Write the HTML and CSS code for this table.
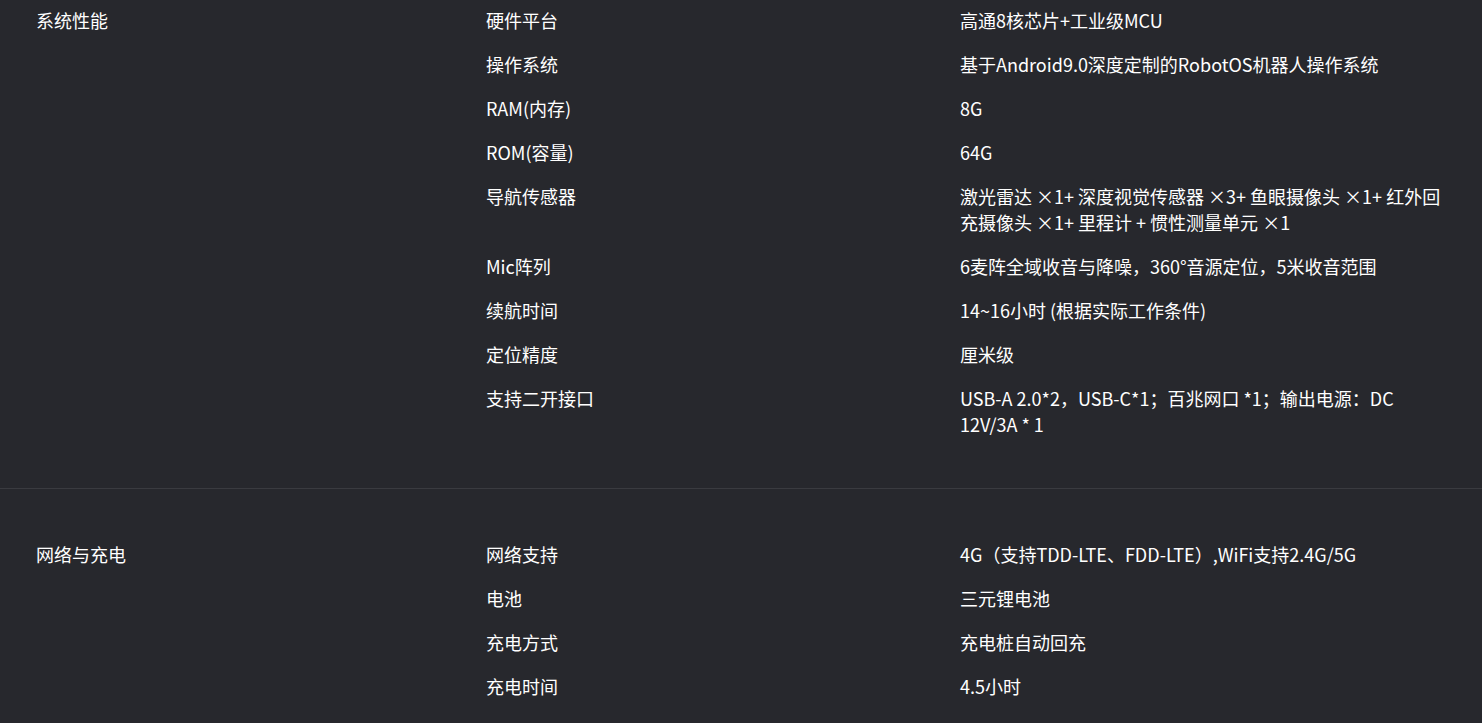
FILE: index.html
```html
<!DOCTYPE html>
<html lang="zh-CN">
<head>
    <meta charset="UTF-8">
    <meta name="viewport" content="width=device-width, initial-scale=1.0">
    <title>产品参数</title>
    <link rel="stylesheet" href="styles.css">
</head>
<body>
    <div class="specs">
        <section class="spec-group">
            <h3 class="group-title">系统性能</h3>
            <dl class="spec-list">
                <div class="spec-row"><dt>硬件平台</dt><dd>高通8核芯片+工业级MCU</dd></div>
                <div class="spec-row"><dt>操作系统</dt><dd>基于Android9.0深度定制的RobotOS机器人操作系统</dd></div>
                <div class="spec-row"><dt>RAM(内存)</dt><dd>8G</dd></div>
                <div class="spec-row"><dt>ROM(容量)</dt><dd>64G</dd></div>
                <div class="spec-row"><dt>导航传感器</dt><dd>激光雷达 ×1+ 深度视觉传感器 ×3+ 鱼眼摄像头 ×1+ 红外回充摄像头 ×1+ 里程计 + 惯性测量单元 ×1</dd></div>
                <div class="spec-row"><dt>Mic阵列</dt><dd>6麦阵全域收音与降噪，360°音源定位，5米收音范围</dd></div>
                <div class="spec-row"><dt>续航时间</dt><dd>14~16小时 (根据实际工作条件)</dd></div>
                <div class="spec-row"><dt>定位精度</dt><dd>厘米级</dd></div>
                <div class="spec-row"><dt>支持二开接口</dt><dd>USB-A 2.0*2，USB-C*1；百兆网口 *1；输出电源：DC 12V/3A * 1</dd></div>
            </dl>
        </section>

        <section class="spec-group">
            <h3 class="group-title">网络与充电</h3>
            <dl class="spec-list">
                <div class="spec-row"><dt>网络支持</dt><dd>4G（支持TDD-LTE、FDD-LTE）,WiFi支持2.4G/5G</dd></div>
                <div class="spec-row"><dt>电池</dt><dd>三元锂电池</dd></div>
                <div class="spec-row"><dt>充电方式</dt><dd>充电桩自动回充</dd></div>
                <div class="spec-row"><dt>充电时间</dt><dd>4.5小时</dd></div>
            </dl>
        </section>
    </div>
</body>
</html>
```

FILE: styles.css
```css
* {
    margin: 0;
    padding: 0;
    box-sizing: border-box;
}

body {
    font-family: "Noto Sans CJK SC", "Noto Sans", sans-serif;
    font-size: 18px;
    line-height: 26px;
    color: #fff;
    background: #27282d;
}

.spec-group {
    display: flex;
    padding: 52px 0 51px 36px;
    border-bottom: 1px solid #3a3b40;
}

.spec-group:first-child {
    padding-top: 7px;
}

.group-title {
    width: 450px;
    flex-shrink: 0;
    font-size: 18px;
    font-weight: 400;
}

.spec-list {
    display: flex;
    flex-direction: column;
    gap: 18px;
}

.spec-row {
    display: flex;
}

.spec-row dt {
    width: 474px;
    flex-shrink: 0;
}

.spec-row dd {
    width: 486px;
}
```
